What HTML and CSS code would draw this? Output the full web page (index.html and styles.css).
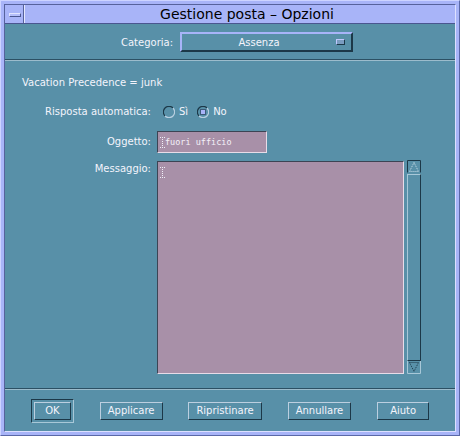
FILE: index.html
```html
<!DOCTYPE html>
<html lang="it">
<head>
<meta charset="utf-8">
<title>Gestione posta – Opzioni</title>
<link rel="stylesheet" href="styles.css">
</head>
<body>
<div class="window">
  <div class="inner">
    <div class="titlebar">
      <div class="menubtn"><span class="menuicon"></span></div>
      <div class="title">Gestione posta – Opzioni</div>
    </div>
    <div class="body">
      <div class="catrow">
        <span class="catlabel">Categoria:</span>
        <div class="option">
          <span class="optiontext">Assenza</span>
          <span class="indicator"></span>
        </div>
      </div>
      <div class="sep"></div>
      <div class="vac">Vacation Precedence = junk</div>
      <div class="row radiorow">
        <span class="label">Risposta automatica:</span>
        <div class="radios">
          <span class="radio">
            <svg width="12" height="12" viewBox="0 0 12 12"><path d="M10 2 A5.5 5.5 0 0 0 2 10" fill="none" stroke="#1c3848" stroke-width="1.2"/><path d="M2 10 A5.5 5.5 0 0 0 10 2" fill="none" stroke="#b8cfe0" stroke-width="1.2"/></svg>
          </span>
          <span class="radiolabel">Sì</span>
          <span class="radio">
            <svg width="12" height="12" viewBox="0 0 12 12"><path d="M10 2 A5.5 5.5 0 0 0 2 10" fill="none" stroke="#1c3848" stroke-width="1.2"/><path d="M2 10 A5.5 5.5 0 0 0 10 2" fill="none" stroke="#b8cfe0" stroke-width="1.2"/><rect x="3.5" y="3.5" width="5" height="5" fill="#a8b4f8" stroke="#3c5a78" stroke-width="1"/></svg>
          </span>
          <span class="radiolabel">No</span>
        </div>
      </div>
      <div class="row fieldrow">
        <span class="label">Oggetto:</span>
        <div class="field">
          <svg class="ibeam" width="5" height="11" viewBox="0 0 5 11"><path d="M0 0.5h5M0 10.5h5M2.5 0v11" fill="none" stroke="#f0f0f8" stroke-width="1" stroke-dasharray="1 1"/></svg>
          <span class="fieldtext">fuori ufficio</span>
        </div>
      </div>
      <div class="row msgrow">
        <span class="label msglabel">Messaggio:</span>
        <div class="textarea">
          <svg class="ibeam2" width="5" height="11" viewBox="0 0 5 11"><path d="M0 0.5h5M0 10.5h5M2.5 0v11" fill="none" stroke="#f0f0f8" stroke-width="1" stroke-dasharray="1 1"/></svg>
        </div>
        <div class="scroll">
          <div class="arrow up">
            <svg width="14" height="13" viewBox="0 0 14 13"><path d="M0.5 12.5V0.5H13.5V12.5" fill="none" stroke="#1c3848"/><path d="M7 2.5L2.5 11.5H11.5Z" fill="none" stroke="#c8dce8" stroke-dasharray="1 1"/></svg>
          </div>
          <div class="thumb"></div>
          <div class="arrow down">
            <svg width="14" height="13" viewBox="0 0 14 13"><path d="M0.5 0V12.5H13.5V0" fill="none" stroke="#a8c8d8"/><path d="M2.5 1.5H11.5L7 10.5Z" fill="none" stroke="#1c3848" stroke-dasharray="1 1"/></svg>
          </div>
        </div>
      </div>
      <div class="bottom">
        <div class="sep2"></div>
        <div class="buttons">
          <div class="defring"><div class="btn btn-ok">OK</div></div>
          <div class="btn">Applicare</div>
          <div class="btn">Ripristinare</div>
          <div class="btn">Annullare</div>
          <div class="btn btn-help">Aiuto</div>
        </div>
      </div>
    </div>
  </div>
</div>
</body>
</html>
```

FILE: styles.css
```css
* { box-sizing: border-box; }
html, body { margin: 0; padding: 0; }
body {
  width: 460px;
  height: 436px;
  overflow: hidden;
  background: #a8b4f8;
  font-family: "DejaVu Sans", sans-serif;
  font-size: 10px;
  color: #f4f4fc;
}
.window {
  width: 460px;
  height: 436px;
  border: 1px solid;
  border-color: #cdd4ff #5a68a8 #5a68a8 #cdd4ff;
  padding: 3px;
  background: #a8b4f8;
}
.inner {
  height: 100%;
  border: 1px solid;
  border-color: #56629c #dde0ff #dde0ff #56629c;
  display: flex;
  flex-direction: column;
}
.titlebar {
  height: 19px;
  display: flex;
  background: #a8b4f8;
  border-bottom: 1px solid #4a5690;
}
.menubtn {
  width: 19px;
  border-right: 1px solid #56629c;
  padding: 8px 0 0 4px;
}
.menuicon {
  display: block;
  width: 12px;
  height: 4px;
  background: #b4befa;
  border: 1px solid;
  border-color: #e0e4ff #4a5690 #4a5690 #e0e4ff;
}
.title {
  flex: 1;
  border-left: 1px solid #e4e8ff;
  text-align: center;
  padding-left: 14px;
  padding-top: 1px;
  font-size: 14px;
  line-height: 17px;
  color: #000;
}
.body {
  flex: 1;
  background: #5890a8;
  display: flex;
  flex-direction: column;
}
.catrow {
  display: flex;
  align-items: center;
  padding: 8px 0 0 116px;
}
.catlabel {
  width: 59px;
}
.option {
  width: 173px;
  height: 20px;
  display: flex;
  align-items: center;
  border: 2px solid;
  border-color: #a8b4f8 #1c3848 #1c3848 #a8b4f8;
}
.optiontext {
  flex: 1;
  text-align: center;
}
.indicator {
  width: 9px;
  height: 6px;
  margin-right: 6px;
  background: #7a9cc0;
  border: 1px solid;
  border-color: #c0c8ff #1c3848 #1c3848 #c0c8ff;
}
.sep {
  margin-top: 7px;
  height: 2px;
  border-top: 1px solid #2c5064;
  border-bottom: 1px solid #9cbccc;
}
.vac {
  margin-top: 15px;
  padding-left: 17px;
  line-height: 14px;
}
.row {
  display: flex;
}
.label {
  width: 146px;
  text-align: right;
  line-height: 14px;
  white-space: nowrap;
}
.radiorow {
  margin-top: 16px;
  height: 12px;
  align-items: center;
}
.radios {
  display: flex;
  align-items: center;
  padding-left: 12px;
}
.radio {
  display: block;
  width: 12px;
  height: 12px;
}
.radio svg { display: block; }
.radiolabel {
  margin: 0 9px 0 4px;
  line-height: 12px;
}
.fieldrow {
  margin-top: 13px;
  align-items: center;
}
.field {
  margin-left: 6px;
  width: 110px;
  height: 22px;
  background: #a890a8;
  border: 1px solid;
  border-color: #3c4454 #e8dce8 #e8dce8 #3c4454;
  display: flex;
  align-items: center;
  padding-left: 2px;
}
.ibeam { display: block; flex: none; }
.fieldtext {
  margin-left: 0px;
  font-family: "DejaVu Sans Mono", monospace;
  font-size: 8.5px;
  color: #f4f0f8;
}
.msgrow {
  margin-top: 8px;
  align-items: flex-start;
}
.msglabel {
  margin-top: 1px;
}
.textarea {
  margin-left: 6px;
  width: 247px;
  height: 213px;
  background: #a890a8;
  border: 1px solid;
  border-color: #3c4454 #e8dce8 #e8dce8 #3c4454;
  padding: 5px 0 0 2px;
}
.ibeam2 { display: block; }
.scroll {
  margin-left: 3px;
  margin-top: -1px;
  width: 14px;
  height: 214px;
  display: flex;
  flex-direction: column;
}
.arrow { height: 13px; }
.arrow svg { display: block; }
.thumb {
  flex: 1;
  margin: 1px 0 0 0;
  border: 1px solid;
  border-color: #a8c8d8 #1c3848 #1c3848 #a8c8d8;
}
.bottom {
  margin-top: auto;
}
.sep2 {
  height: 2px;
  border-top: 1px solid #2c5064;
  border-bottom: 1px solid #9cbccc;
}
.buttons {
  display: flex;
  justify-content: space-evenly;
  align-items: center;
  padding: 9px 0 8px;
}
.defring {
  border: 1px solid;
  border-color: #1c3848 #a8c8d8 #a8c8d8 #1c3848;
  padding: 2px;
}
.btn {
  height: 18px;
  padding: 0 7px;
  line-height: 16px;
  text-align: center;
  border: 1px solid;
  border-color: #bccfe0 #1c3848 #1c3848 #bccfe0;
  white-space: nowrap;
}
.btn-ok { min-width: 37px; }
.btn-help { min-width: 52px; }
```
